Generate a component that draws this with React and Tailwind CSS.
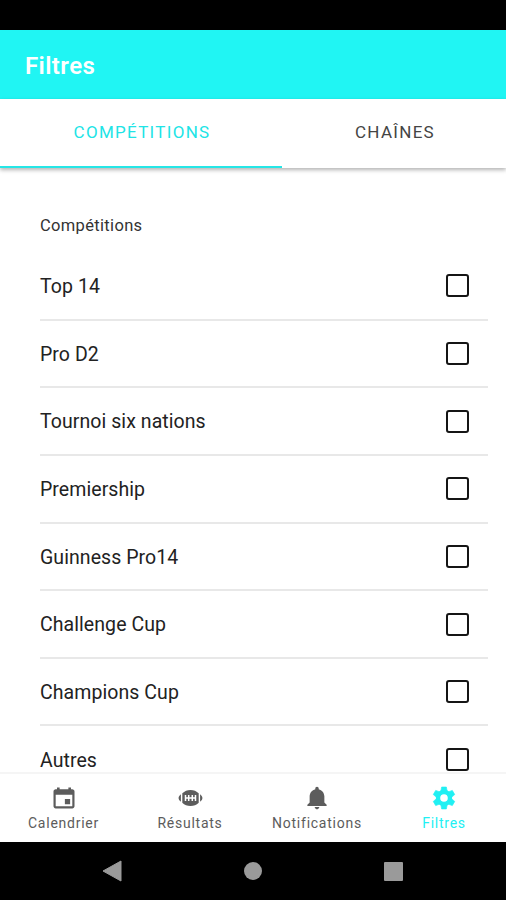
import { IoMdCalendar, IoMdNotifications } from "react-icons/io";

const competitions = [
  "Top 14",
  "Pro D2",
  "Tournoi six nations",
  "Premiership",
  "Guinness Pro14",
  "Challenge Cup",
  "Champions Cup",
  "Autres",
];

function Football({ className }) {
  return (
    <svg className={className} viewBox="0 0 28 28" fill="currentColor">
      <path d="M6.300 9.300C8.500 7.200 11.200 6 14.500 6s6 1.200 8.200 3.300v9.400c-2.200 2.100-4.900 3.300-8.200 3.300s-6-1.200-8.200-3.300Z" />
      <path d="M4.900 10.200v7.600C3.300 16.500 2.600 15.300 2.600 14s.7-2.500 2.300-3.800ZM24.100 10.200v7.600c1.600-1.300 2.300-2.500 2.300-3.800s-.7-2.500-2.300-3.800Z" />
      <path d="M8.800 14h11.400M9.500 11v6M12.700 11v6M16.300 11v6M19.500 11v6" stroke="white" strokeWidth="1.500" />
    </svg>
  );
}

function Gear({ className }) {
  return (
    <svg className={className} viewBox="0 0 28 28" fill="currentColor">
      <circle cx="14" cy="14" r="6" fill="none" stroke="currentColor" strokeWidth="4.400" />
      {[0, 60, 120, 180, 240, 300].map((angle) => (
        <path key={angle} d="M11.600 3h4.800l.9 5h-6.600Z" stroke="currentColor" strokeWidth="0.600" strokeLinejoin="round" transform={`rotate(${angle} 14 14)`} />
      ))}
    </svg>
  );
}

const nav = [
  { label: "Calendrier", Icon: IoMdCalendar, width: "w-[127px]" },
  { label: "Résultats", Icon: Football, width: "w-[126px]" },
  { label: "Notifications", Icon: IoMdNotifications, width: "w-[128px]" },
  { label: "Filtres", Icon: Gear, width: "w-[126px]", active: true },
];

function Row({ label }) {
  return (
    <li className="flex h-[67.65px] shrink-0 items-center justify-between border-b-2 border-[#e8e8e8] pr-[19px] last:border-transparent">
      <span className="pt-0.5 text-[19.5px] tracking-[0.07px] text-[#222]">{label}</span>
      <span className="size-[23px] rounded-[3px] border-2 border-[#151515]" />
    </li>
  );
}

export default function App() {
  return (
    <div className="flex h-[900px] w-[506px] flex-col overflow-hidden bg-white font-['Roboto',sans-serif]">
      <div className="h-[29.5px] shrink-0 bg-black" />
      <header className="flex h-[69px] shrink-0 items-center bg-[#20f5f3] pl-[25px] pt-[3px]">
        <h1 className="text-[24px] font-semibold tracking-[0.4px] text-white">Filtres</h1>
      </header>
      <nav className="z-10 flex h-[69.5px] shrink-0 bg-white text-[17px] tracking-[1.3px] shadow-[0_2px_4px_rgba(0,0,0,0.3)]">
        <div className="flex w-[282px] items-center justify-center border-b-[2.5px] border-[#25e6e6] pl-0.5 text-[#20e4e6]">COMPÉTITIONS</div>
        <div className="flex flex-1 items-center justify-center border-b-[2.5px] border-transparent pl-0.5 text-[#444]">CHAÎNES</div>
      </nav>
      <main className="flex min-h-0 flex-1 flex-col overflow-hidden pl-10 pr-[18px]">
        <h2 className="mt-[47px] h-[38px] shrink-0 text-[16.5px] leading-[22px] tracking-[0.33px] text-[#333]">Compétitions</h2>
        <ul className="flex flex-col">
          {competitions.map((label) => (
            <Row key={label} label={label} />
          ))}
        </ul>
      </main>
      <footer className="flex h-[70px] shrink-0 border-t-2 border-[#f5f5f5] bg-white">
        {nav.map(({ label, Icon, width, active }) => (
          <div key={label} className={`flex shrink-0 flex-col items-center pt-2.5 ${width} ${active ? "text-[#20f0f3]" : "text-[#5c5c5c]"}`}>
            <Icon className="size-7" />
            <span className="mt-px text-[14px] leading-5 tracking-[0.75px]">{label}</span>
          </div>
        ))}
      </footer>
      <div className="flex h-[58px] shrink-0 items-center justify-between bg-black pl-[102px] pr-[103px]">
        <svg className="h-[22px] w-5" viewBox="0 0 20 22"><path d="M1 11 19 1v20Z" fill="#9a9a9a" stroke="#9a9a9a" strokeLinejoin="round" /></svg>
        <span className="size-[18px] rounded-full bg-[#9a9a9a]" />
        <span className="size-[19px] rounded-[1px] bg-[#9a9a9a]" />
      </div>
    </div>
  );
}
